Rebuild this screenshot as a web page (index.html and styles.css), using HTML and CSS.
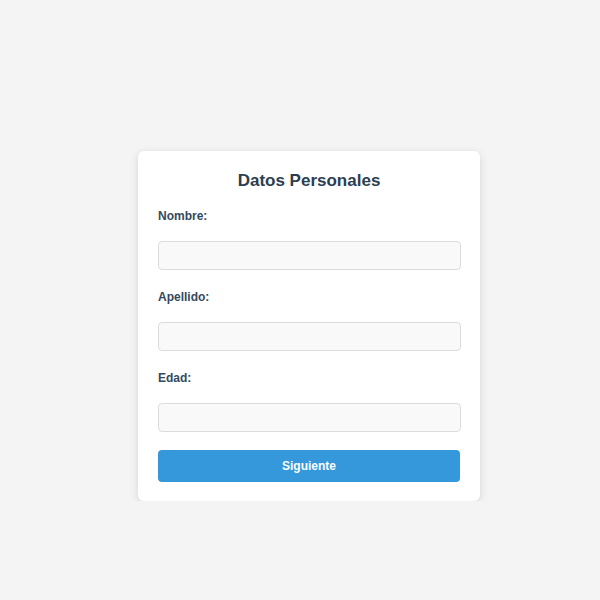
FILE: index.html
```html
<!DOCTYPE html>
<html lang="es">
<head>
<meta charset="utf-8">
<title>Datos Personales</title>
<link rel="stylesheet" href="styles.css">
</head>
<body>
<div class="page">
  <form class="card">
    <h2 class="title">Datos Personales</h2>
    <label class="label" for="nombre">Nombre:</label>
    <input class="field" id="nombre" type="text">
    <label class="label" for="apellido">Apellido:</label>
    <input class="field" id="apellido" type="text">
    <label class="label" for="edad">Edad:</label>
    <input class="field" id="edad" type="text">
    <button class="btn" type="button">Siguiente</button>
  </form>
</div>
</body>
</html>
```
FILE: styles.css
```css
html, body {
  margin: 0;
  padding: 0;
  background: #f4f4f4;
  font-family: "Liberation Sans", Arial, sans-serif;
}
.page {
  padding: 151px 0 0 138px;
}
.card {
  box-sizing: border-box;
  width: 342px;
  background: #ffffff;
  border-radius: 6px;
  box-shadow: 0 2px 8px rgba(0, 0, 0, 0.13);
  padding: 20px 20px 19px 20px;
  display: flex;
  flex-direction: column;
}
.title {
  margin: 0 0 18px 0;
  font-size: 17px;
  line-height: 20px;
  font-weight: bold;
  text-align: center;
  color: #2c3e50;
}
.label {
  display: block;
  font-size: 12px;
  line-height: 14px;
  font-weight: bold;
  color: #34495e;
  margin: 0 0 18px 0;
}
.field {
  box-sizing: border-box;
  width: 303px;
  height: 29px;
  margin: 0 0 20px 0;
  padding: 0 8px;
  background: #f9f9f9;
  border: 1px solid #dcdcdc;
  border-radius: 4px;
  font-family: inherit;
  font-size: 12px;
}
.field:last-of-type {
  margin-bottom: 18px;
}
.btn {
  box-sizing: border-box;
  width: 302px;
  height: 32px;
  border: none;
  border-radius: 4px;
  background: #3498db;
  color: #ffffff;
  font-family: inherit;
  font-size: 12px;
  font-weight: bold;
  cursor: pointer;
}
```
